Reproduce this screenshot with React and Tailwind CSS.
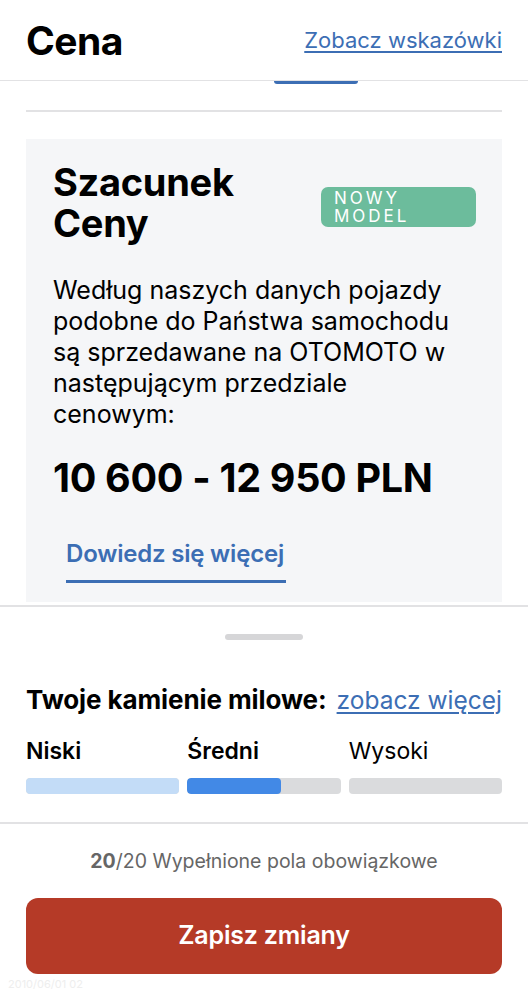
import React from "react";

const font = { fontFamily: "Inter, 'Noto Sans', sans-serif" };

function LevelBar({ label, bold, fill, filledPct }) {
  return (
    <div className="flex flex-col">
      <span className={`text-[23px] leading-[30px] text-black ${bold ? "font-semibold" : "font-normal"}`}>
        {label}
      </span>
      <div className="mt-[12px] h-[16px] rounded-[4px] bg-[#dadbdd] overflow-hidden flex">
        <div className={`h-full rounded-[4px] ${fill}`} style={{ width: `${filledPct}%` }} />
      </div>
    </div>
  );
}

export default function App() {
  return (
    <div className="w-[528px] h-[1000px] bg-white overflow-hidden flex flex-col" style={font}>
      {/* Header */}
      <div className="h-[81px] shrink-0 px-[26px] flex items-center justify-between border-b border-[#e2e2e4]">
        <h1 className="text-[39px] font-bold tracking-[-0.5px] text-black leading-none mt-[1px]">Cena</h1>
        <a className="text-[22px] text-[#3c6eb4] underline underline-offset-[3px] decoration-[1.5px] mt-[1px]">
          Zobacz wskazówki
        </a>
      </div>

      {/* Scroll content */}
      <div className="flex-1 flex flex-col">
        <div className="ml-[274px] w-[84px] h-[3px] bg-[#3c6eb4] rounded-b-full" />
        <div className="mx-[26px] mt-[26px] h-[2px] bg-[#e2e2e4]" />

        <div className="mx-[26px] mt-[27px] bg-[#f5f6f8] px-[27px] pt-[23px] pb-[19px]">
          <div className="flex items-start justify-between">
            <h2 className="text-[38px] font-bold leading-[41px] tracking-[-0.3px] text-black">
              <div>Szacunek</div>
              <div>Ceny</div>
            </h2>
            <span className="mt-[25px] mr-[-1px] w-[155px] h-[40px] rounded-[7px] bg-[#6cbc9c] text-white text-[17px] leading-[18px] tracking-[3px] pl-[13px] pt-[2px]">
              NOWY
              <br />
              MODEL
            </span>
          </div>
          <p className="mt-[31px] w-[405px] text-[25px] leading-[31px] text-black">
            Według naszych danych pojazdy podobne do Państwa samochodu są sprzedawane na OTOMOTO w
            następującym przedziale cenowym:
          </p>
          <p className="mt-[25px] text-[39.5px] font-bold leading-[46px] tracking-[-0.3px] text-black">
            10 600 - 12 950 PLN
          </p>
          <div className="mt-[37px] ml-[13px] inline-flex flex-col">
            <span className="text-[24px] font-semibold leading-[32px] text-[#3c6eb4] tracking-[-0.2px]">
              Dowiedz się więcej
            </span>
            <span className="mt-[10px] h-[3px] w-[220px] bg-[#3c6eb4]" />
          </div>
        </div>
      </div>

      {/* Bottom sheet */}
      <div className="shrink-0 border-t-2 border-[#e2e2e4] flex flex-col">
        <div className="mt-[27px] mx-auto w-[78px] h-[6px] rounded-full bg-[#d6d6d8]" />
        <div className="mt-[40px] px-[26px] flex items-baseline justify-between">
          <span className="text-[26px] font-bold text-black tracking-[-0.1px]">Twoje kamienie milowe:</span>
          <a className="text-[24.5px] text-[#3c6eb4] underline underline-offset-[3px] decoration-[1.5px]">
            zobacz więcej
          </a>
        </div>
        <div className="mt-[17px] px-[26px] grid grid-cols-3 gap-[8px] pb-[28px]">
          <LevelBar label="Niski" bold fill="bg-[#c3dcf7]" filledPct={100} />
          <LevelBar label="Średni" bold fill="bg-[#4289e6]" filledPct={61} />
          <LevelBar label="Wysoki" fill="bg-[#dadbdd]" filledPct={0} />
        </div>
        <div className="h-[2px] bg-[#e2e2e4]" />
        <p className="mt-[23px] text-center text-[19.5px] text-[#666666]">
          <span className="font-bold">20</span>/20 Wypełnione pola obowiązkowe
        </p>
        <div className="mt-[22px] mx-[26px] h-[76px] rounded-[12px] bg-[#b53a27] flex items-center justify-center">
          <span className="text-[25px] font-semibold text-white tracking-[-0.2px]">Zapisz zmiany</span>
        </div>
        <div className="h-[26px] px-[8px] text-[11px] text-[#eeeeee] leading-[20px]">2010/06/01 02</div>
      </div>
    </div>
  );
}
